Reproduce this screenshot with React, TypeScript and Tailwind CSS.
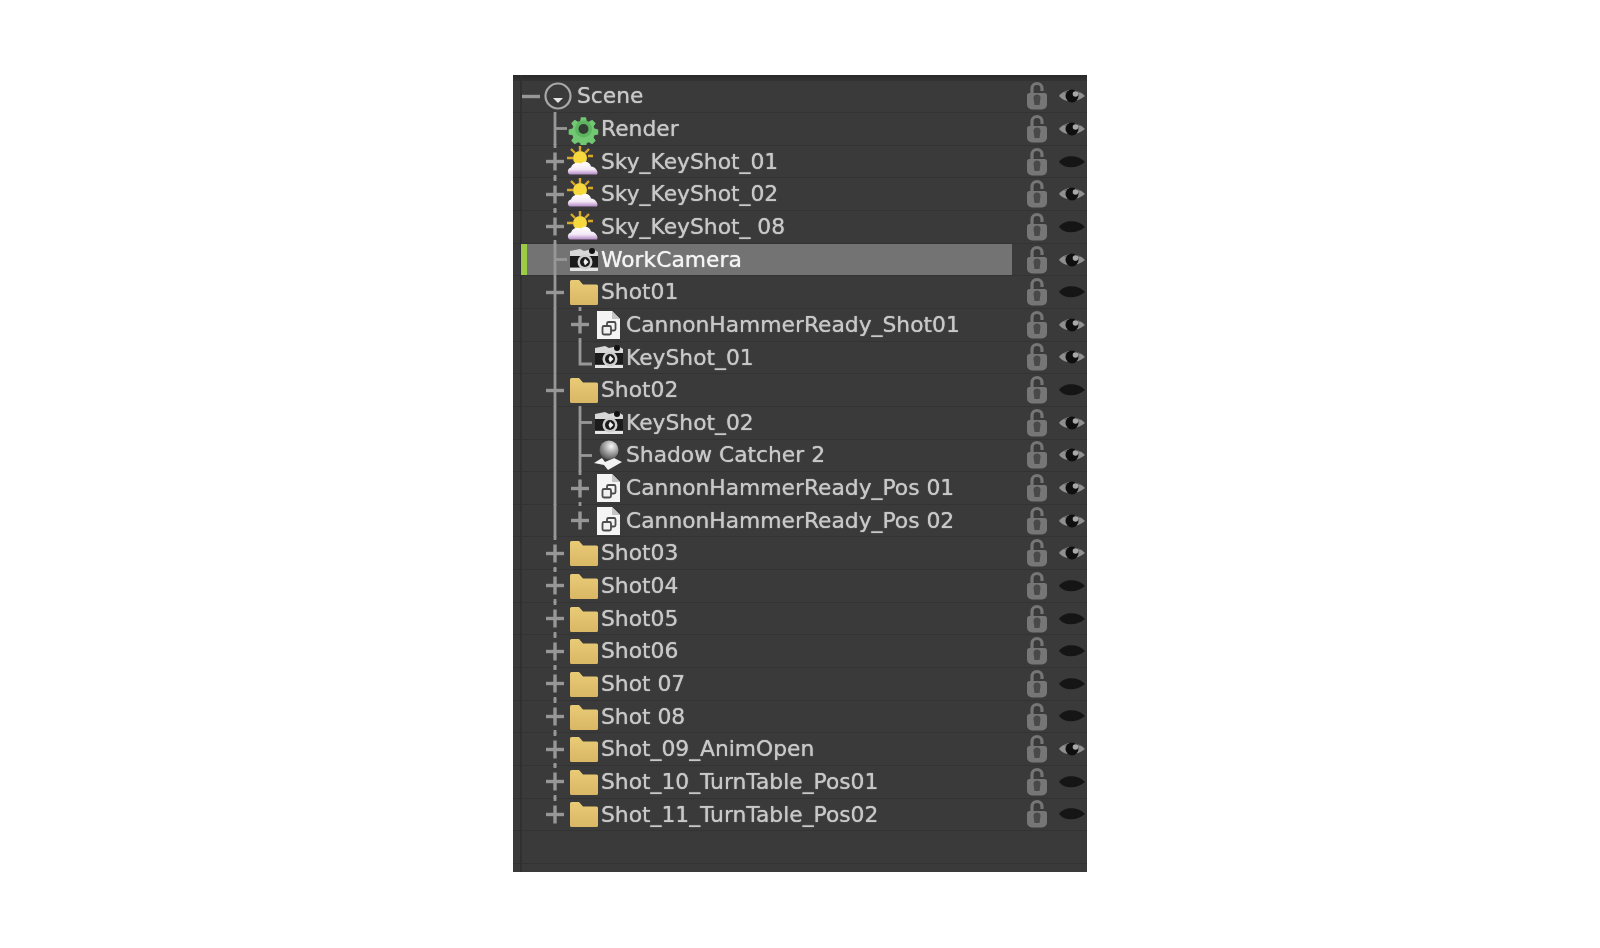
import React from "react";

type Row = {
  name: string;
  icon: "scene" | "gear" | "sky" | "camera" | "folder" | "doc" | "shadow";
  level: 0 | 1 | 2;
  mark: "plus" | "minus" | "tee" | "corner";
  trunk?: "solid" | "stub" | "none";
  branch?: "solid" | "stub" | "none";
  eye: boolean;
  selected?: boolean;
  last?: boolean;
};

const rows: Row[] = [
  { name: "Scene", icon: "scene", level: 0, mark: "minus", trunk: "none", eye: true },
  { name: "Render", icon: "gear", level: 1, mark: "tee", trunk: "solid", eye: true },
  { name: "Sky_KeyShot_01", icon: "sky", level: 1, mark: "plus", trunk: "stub", eye: false },
  { name: "Sky_KeyShot_02", icon: "sky", level: 1, mark: "plus", trunk: "stub", eye: true },
  { name: "Sky_KeyShot_ 08", icon: "sky", level: 1, mark: "plus", trunk: "stub", eye: false },
  { name: "WorkCamera", icon: "camera", level: 1, mark: "tee", trunk: "solid", eye: true, selected: true },
  { name: "Shot01", icon: "folder", level: 1, mark: "minus", trunk: "solid", eye: false },
  { name: "CannonHammerReady_Shot01", icon: "doc", level: 2, mark: "plus", trunk: "solid", branch: "stub", eye: true },
  { name: "KeyShot_01", icon: "camera", level: 2, mark: "corner", trunk: "solid", eye: true },
  { name: "Shot02", icon: "folder", level: 1, mark: "minus", trunk: "solid", eye: false },
  { name: "KeyShot_02", icon: "camera", level: 2, mark: "tee", trunk: "solid", branch: "solid", eye: true },
  { name: "Shadow Catcher 2", icon: "shadow", level: 2, mark: "tee", trunk: "solid", branch: "solid", eye: true },
  { name: "CannonHammerReady_Pos 01", icon: "doc", level: 2, mark: "plus", trunk: "solid", branch: "stub", eye: true },
  { name: "CannonHammerReady_Pos 02", icon: "doc", level: 2, mark: "plus", trunk: "solid", eye: true },
  { name: "Shot03", icon: "folder", level: 1, mark: "plus", trunk: "stub", eye: true },
  { name: "Shot04", icon: "folder", level: 1, mark: "plus", trunk: "stub", eye: false },
  { name: "Shot05", icon: "folder", level: 1, mark: "plus", trunk: "stub", eye: false },
  { name: "Shot06", icon: "folder", level: 1, mark: "plus", trunk: "stub", eye: false },
  { name: "Shot 07", icon: "folder", level: 1, mark: "plus", trunk: "stub", eye: false },
  { name: "Shot 08", icon: "folder", level: 1, mark: "plus", trunk: "stub", eye: false },
  { name: "Shot_09_AnimOpen", icon: "folder", level: 1, mark: "plus", trunk: "stub", eye: true },
  { name: "Shot_10_TurnTable_Pos01", icon: "folder", level: 1, mark: "plus", trunk: "stub", eye: false },
  { name: "Shot_11_TurnTable_Pos02", icon: "folder", level: 1, mark: "plus", trunk: "stub", eye: false, last: true },
];

const GUIDE = "#979797";

function Guides({ row }: { row: Row }) {
  const x = row.level === 0 ? 18 : row.level === 1 ? 42 : 67;
  const vertical = (vx: number, kind?: string, last?: boolean) => {
    if (kind === "solid") return <line x1={vx} x2={vx} y1={0} y2={33} stroke={GUIDE} strokeWidth={2.8} />;
    if (kind === "stub")
      return (
        <>
          <line x1={vx} x2={vx} y1={-1} y2={3} stroke={GUIDE} strokeWidth={2.8} />
          {!last && <line x1={vx} x2={vx} y1={30} y2={34} stroke={GUIDE} strokeWidth={2.8} />}
        </>
      );
    return null;
  };
  return (
    <svg width="90" height="33" viewBox="0 0 90 33" className="shrink-0 overflow-visible">
      {row.level === 2
        ? vertical(42, row.trunk)
        : vertical(x, row.mark === "plus" ? "stub" : row.level === 0 ? "none" : row.trunk, row.last)}
      {row.level === 2 && row.branch ? vertical(67, row.branch) : null}
      {row.mark === "plus" && (
        <>
          <line x1={x - 9} x2={x + 9} y1={16.5} y2={16.5} stroke={GUIDE} strokeWidth={3.4} />
          <line x1={x} x2={x} y1={7.5} y2={25.5} stroke={GUIDE} strokeWidth={3.4} />
        </>
      )}
      {row.mark === "minus" && <line x1={x - 9} x2={x + 9} y1={16.5} y2={16.5} stroke={GUIDE} strokeWidth={3.4} />}
      {row.mark === "tee" && <line x1={x} x2={x + 12} y1={16.5} y2={16.5} stroke={GUIDE} strokeWidth={2.8} />}
      {row.mark === "corner" && <path d={`M${x} 0V23H${x + 12}`} fill="none" stroke={GUIDE} strokeWidth={2.8} />}
    </svg>
  );
}

function Icon({ kind }: { kind: Row["icon"] }) {
  const size = "h-8 w-8 shrink-0";
  if (kind === "scene")
    return (
      <svg viewBox="0 0 32 32" className={size}>
        <circle cx="15" cy="16" r="12.5" fill="none" stroke="#a8a8a8" strokeWidth="2.2" />
        <path d="M10 18h10l-5 5z" fill="#e4e4e4" />
      </svg>
    );
  if (kind === "gear")
    return (
      <svg viewBox="0 0 32 32" className={size}>
        <path
          d="M13 2h6l1 4.500 2.500 1 3.900-2.500 4.200 4.200-2.500 3.900 1 2.500 4.500 1v6l-4.500 1-1 2.500 2.500 3.900-4.200 4.200-3.900-2.500-2.500 1-1 4.500h-6l-1-4.500-2.500-1-3.900 2.500-4.200-4.200 2.500-3.900-1-2.500-4.500-1v-6l4.500-1 1-2.500-2.500-3.900 4.200-4.200 3.900 2.500 2.500-1z"
          fill="#72c872"
          transform="translate(3 2.500) scale(.84)"
        />
        <circle cx="16.500" cy="16" r="8.500" fill="#4aa24e" opacity=".5" />
        <circle cx="16.500" cy="16" r="5" fill="#343d34" />
      </svg>
    );
  if (kind === "sky")
    return (
      <svg viewBox="0 0 32 32" className={size}>
        <defs>
          <linearGradient id="cloud" x1="0" y1="0" x2="0" y2="1">
            <stop offset="0%" stopColor="#ffffff" />
            <stop offset="60%" stopColor="#f4e9f6" />
            <stop offset="100%" stopColor="#b48ac6" />
          </linearGradient>
        </defs>
        <path d="M13 0v5M4 3l4 4M22 3l-4 4M0 12h6M26 10h-5" stroke="#d9a92a" strokeWidth="2.400" />
        <circle cx="13" cy="12" r="7" fill="#f7d93f" />
        <path d="M3 28.500c-3-1-3-6 1-7 1-4 6-6 10-4 3-3 9-2 10 3 4 0 8 5 6 8z" fill="url(#cloud)" />
      </svg>
    );
  if (kind === "camera")
    return (
      <svg viewBox="0 0 32 32" className={size}>
        <path d="M3 12V7l10-2 4 2 9-2 5 3v4z" fill="#d8d8d8" />
        <rect x="3" y="12" width="28" height="11" fill="#1b1b1b" />
        <circle cx="25" cy="7" r="3" fill="#111" />
        <rect x="3" y="24" width="28" height="3" fill="#e4e4e4" />
        <circle cx="18" cy="18" r="7.500" fill="#cfcfcf" />
        <circle cx="18" cy="18" r="5" fill="#1a1a1a" />
        <path d="M18 14.500l3.500 3.500-3.500 3.500-1.500-3.500z" fill="#f0f0f0" />
      </svg>
    );
  if (kind === "folder")
    return (
      <svg viewBox="0 0 32 32" className={size}>
        <defs>
          <linearGradient id="folder" x1="0" y1="0" x2="0" y2="1">
            <stop offset="0%" stopColor="#e9cb76" />
            <stop offset="100%" stopColor="#d9b765" />
          </linearGradient>
        </defs>
        <path
          d="M3 5.500a1.500 1.500 0 0 1 1.500-1.500H12l4 4.500h13.500A1.500 1.500 0 0 1 31 10v17.500a1.500 1.500 0 0 1-1.500 1.500h-25A1.500 1.500 0 0 1 3 27.500z"
          fill="url(#folder)"
        />
      </svg>
    );
  if (kind === "doc")
    return (
      <svg viewBox="0 0 32 32" className={size}>
        <path d="M5 2h15l8 8v20H5z" fill="#f4f4f4" />
        <path d="M20 2v8h8z" fill="#c4c4c4" />
        <rect x="15" y="13" width="8.500" height="8.500" rx="1.500" fill="none" stroke="#4c4c4c" strokeWidth="1.800" />
        <rect x="10.500" y="17" width="8.500" height="8.500" rx="1.500" fill="#f0f0f0" stroke="#4c4c4c" strokeWidth="1.800" />
      </svg>
    );
  return (
    <svg viewBox="0 0 32 32" className={size}>
      <defs>
        <radialGradient id="ball" cx="62%" cy="30%" r="75%">
          <stop offset="0%" stopColor="#f8f8f8" />
          <stop offset="100%" stopColor="#4d4d4d" />
        </radialGradient>
      </defs>
      <path d="M2 24l8-5 3 4 9-4 8 4-14 8-4-5z" fill="#f2f2f2" />
      <circle cx="17" cy="11" r="9.500" fill="url(#ball)" />
    </svg>
  );
}

function Lock() {
  return (
    <svg viewBox="0 0 24 32" className="h-8 w-6 shrink-0">
      <path d="M7 15V8.500a5 5 0 0 1 10 0V11" fill="none" stroke="#767676" strokeWidth="3.200" />
      <path d="M4.500 13h15a2.500 2.500 0 0 1 2.500 2.500v9a5 5 0 0 1-5 5H7a5 5 0 0 1-5-5v-9A2.500 2.500 0 0 1 4.500 13z" fill="#767676" />
      <path d="M8.500 18a3.500 3.500 0 0 1 7 0l-1 7h-5z" fill="#494949" />
    </svg>
  );
}

function Eye({ open }: { open: boolean }) {
  return (
    <svg viewBox="0 0 28 20" className="h-5 w-7 shrink-0">
      <path d="M1 10C6 3 19 2 27 10 19 17 6 17 1 10z" fill={open ? "#8f8f8f" : "#151515"} />
      {open && (
        <>
          <path d="M6 7C10 3.500 18 3.500 23 7 18 5 10 5.500 6 7z" fill="#232323" />
          <circle cx="14" cy="10" r="6.500" fill="#0f0f0f" />
          <circle cx="17.500" cy="8" r="2.800" fill="#a8a8a8" />
        </>
      )}
    </svg>
  );
}

function TreeRow({ row }: { row: Row }) {
  const iconGap = row.level === 0 ? "-ml-[60px]" : row.level === 1 ? "-ml-[36px]" : "-ml-[11px]";
  return (
    <div className="flex h-[32.65px] items-center border-b border-[#333333] pl-[8px]">
      <div className="relative flex h-full w-[491px] items-center">
        {row.selected && (
          <>
            <div className="absolute left-0 top-0 h-full w-[6px] bg-[#9ccc45]" />
            <div className="absolute left-[6px] right-0 top-0 h-full bg-[#737373]" />
          </>
        )}
        <div className="relative z-10 -ml-[8px] flex items-center">
          <Guides row={row} />
          <div className={`${iconGap} flex items-center`}>
            <Icon kind={row.icon} />
            <span
              className={`ml-[2px] whitespace-nowrap text-[21.8px] leading-none ${
                row.selected
                  ? "text-[#f4f4f4] [text-shadow:0_0_1px_#f4f4f4]"
                  : "text-[#c8c8c8] [text-shadow:0_0_1px_#c8c8c8]"
              }`}
            >
              {row.name}
            </span>
          </div>
        </div>
      </div>
      <div className="ml-[13px] flex items-center">
        <Lock />
      </div>
      <div className="ml-[9px] flex items-center">
        <Eye open={row.eye} />
      </div>
    </div>
  );
}

export default function App() {
  return (
    <div className="min-h-[948px] bg-white pt-[75px] font-['DejaVu_Sans',sans-serif]">
      <div className="relative mx-auto h-[797px] w-[574px] overflow-hidden bg-[#3a3a3a] blur-[0.6px]">
        <div className="absolute bottom-0 left-[7px] top-0 w-[2px] bg-[#303030]" />
        <div className="h-[5.5px] bg-linear-to-b from-[#282828] to-[#333333]" />
        {rows.map((row) => (
          <TreeRow key={row.name} row={row} />
        ))}
        <div className="h-[32.65px] border-b border-[#333333]" />
      </div>
    </div>
  );
}
